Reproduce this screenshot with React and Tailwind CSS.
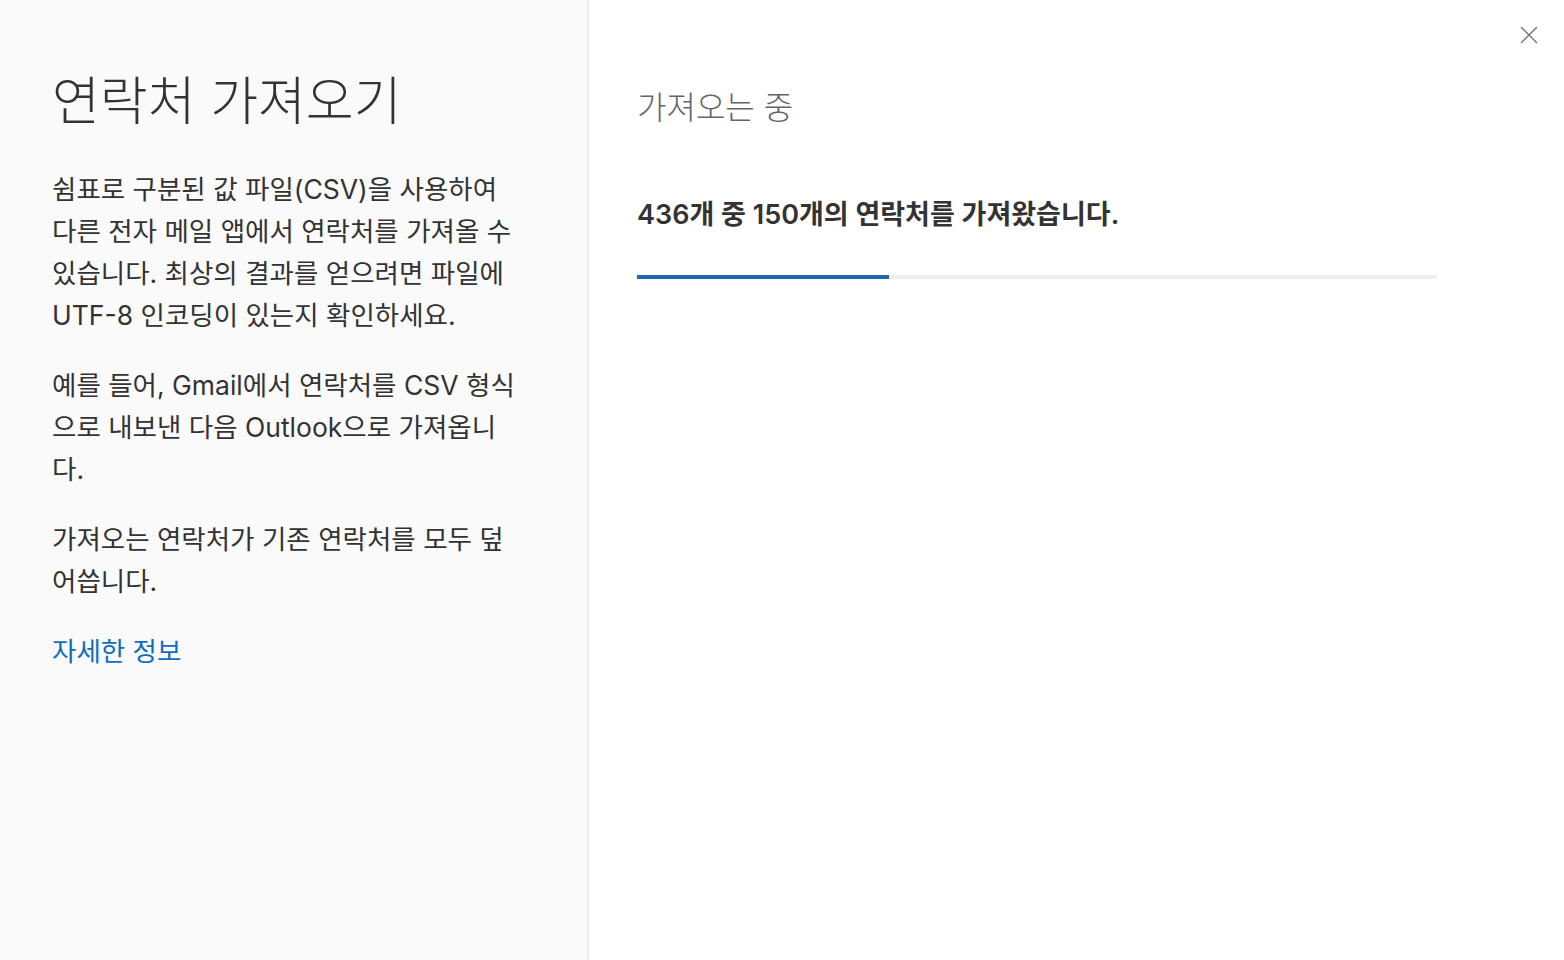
import { X } from 'lucide-react'

const font = { fontFamily: '"Inter", "Noto Sans CJK KR", sans-serif' }

function InfoPanel() {
  return (
    <div className="w-[589px] shrink-0 bg-[#fafafa] border-r-2 border-[#efefef] px-[52px] pt-[68px] text-[#333]">
      <h1 className="text-[52px] font-extralight leading-[68px] mb-[32px]">연락처 가져오기</h1>
      <div className="text-[26.5px] leading-[42px] flex flex-col gap-[28px] w-[468px]">
        <p>
          쉼표로 구분된 값 파일(CSV)을 사용하여 다른 전자 메일 앱에서 연락처를 가져올 수 있습니다. 최상의 결과를 얻으려면 파일에
          UTF-8 인코딩이 있는지 확인하세요.
        </p>
        <p>예를 들어, Gmail에서 연락처를 CSV 형식으로 내보낸 다음 Outlook으로 가져옵니다.</p>
        <p>가져오는 연락처가 기존 연락처를 모두 덮어씁니다.</p>
        <a href="#" className="text-[#106ebe]">자세한 정보</a>
      </div>
    </div>
  )
}

function ProgressPanel({ done, total }) {
  return (
    <div className="flex-1 relative bg-white pl-[48px] pt-[86px]">
      <button className="absolute top-[20px] right-[20px] text-[#777]">
        <X size={30} strokeWidth={1.2} />
      </button>
      <h2 className="text-[32px] font-extralight text-[#666] leading-[44px]">가져오는 중</h2>
      <p className="mt-[65px] text-[27px] font-semibold text-[#333] leading-[40px]">
        {total}개 중 {done}개의 연락처를 가져왔습니다.
      </p>
      <div className="mt-[40px] w-[800px] h-[4px] bg-[#eeeeee]">
        <div className="h-full w-[252px] bg-[#1e66b4]"></div>
      </div>
    </div>
  )
}

export default function App() {
  return (
    <div className="flex w-[1564px] h-[960px] overflow-hidden" style={font}>
      <InfoPanel />
      <ProgressPanel done={150} total={436} />
    </div>
  )
}
